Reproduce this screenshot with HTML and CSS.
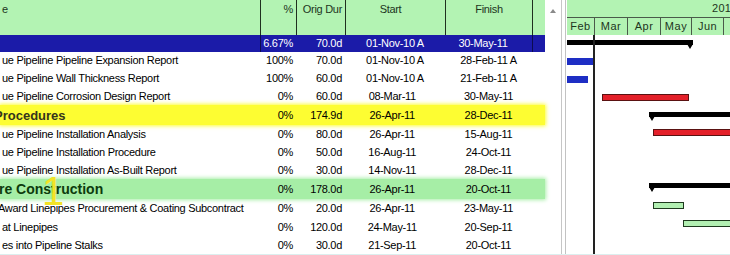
FILE: index.html
```html
<!DOCTYPE html>
<html lang="en">

<head>
    <meta charset="UTF-8">
    <title>Schedule</title>
    <link rel="stylesheet" href="styles.css">
</head>

<body>

    <div class="screen">
        <div class="sheet">
            <div class="cols head">
                <div class="name">e</div>
                <div class="pct">%</div>
                <div class="dur">Orig Dur</div>
                <div class="start">Start</div>
                <div class="finish">Finish</div>
                <div class="extra"></div>
            </div>

            <div class="cols row r17 sel">
                <div class="name"></div>
                <div class="pct">6.67%</div>
                <div class="dur">70.0d</div>
                <div class="start">01-Nov-10 A</div>
                <div class="finish">30-May-11&nbsp;&nbsp;&nbsp;&nbsp;</div>
                <div class="extra"></div>
            </div>
            <div class="cols row r17">
                <div class="name">ue Pipeline Pipeline Expansion Report</div>
                <div class="pct">100%</div>
                <div class="dur">70.0d</div>
                <div class="start">01-Nov-10 A</div>
                <div class="finish">28-Feb-11 A</div>
                <div class="extra"></div>
            </div>
            <div class="cols row">
                <div class="name">ue Pipeline Wall Thickness Report</div>
                <div class="pct">100%</div>
                <div class="dur">60.0d</div>
                <div class="start">01-Nov-10 A</div>
                <div class="finish">21-Feb-11 A</div>
                <div class="extra"></div>
            </div>
            <div class="cols row">
                <div class="name">ue Pipeline Corrosion Design Report</div>
                <div class="pct">0%</div>
                <div class="dur">60.0d</div>
                <div class="start">08-Mar-11&nbsp;&nbsp;</div>
                <div class="finish">30-May-11</div>
                <div class="extra"></div>
            </div>
            <div class="cols row r20 band-yellow">
                <div class="name wbs-yellow">Procedures</div>
                <div class="pct">0%</div>
                <div class="dur">174.9d</div>
                <div class="start">26-Apr-11&nbsp;&nbsp;</div>
                <div class="finish">28-Dec-11</div>
                <div class="extra"></div>
            </div>
            <div class="cols row">
                <div class="name">ue Pipeline Installation Analysis</div>
                <div class="pct">0%</div>
                <div class="dur">80.0d</div>
                <div class="start">26-Apr-11&nbsp;&nbsp;</div>
                <div class="finish">15-Aug-11</div>
                <div class="extra"></div>
            </div>
            <div class="cols row">
                <div class="name">ue Pipeline Installation Procedure</div>
                <div class="pct">0%</div>
                <div class="dur">50.0d</div>
                <div class="start">16-Aug-11&nbsp;&nbsp;</div>
                <div class="finish">24-Oct-11</div>
                <div class="extra"></div>
            </div>
            <div class="cols row">
                <div class="name">ue Pipeline Installation As-Built Report</div>
                <div class="pct">0%</div>
                <div class="dur">30.0d</div>
                <div class="start">14-Nov-11&nbsp;&nbsp;</div>
                <div class="finish">28-Dec-11</div>
                <div class="extra"></div>
            </div>
            <div class="cols row r20 band-green">
                <div class="name wbs-green">re Construction</div>
                <div class="pct">0%</div>
                <div class="dur">178.0d</div>
                <div class="start">26-Apr-11&nbsp;&nbsp;</div>
                <div class="finish">20-Oct-11</div>
                <div class="extra"></div>
            </div>
            <div class="cols row r19">
                <div class="name cut">Award Linepipes Procurement &amp; Coating Subcontract</div>
                <div class="pct">0%</div>
                <div class="dur">20.0d</div>
                <div class="start">26-Apr-11&nbsp;&nbsp;</div>
                <div class="finish">23-May-11</div>
                <div class="extra"></div>
            </div>
            <div class="cols row">
                <div class="name">at Linepipes</div>
                <div class="pct">0%</div>
                <div class="dur">120.0d</div>
                <div class="start">24-May-11&nbsp;&nbsp;</div>
                <div class="finish">20-Sep-11</div>
                <div class="extra"></div>
            </div>
            <div class="cols row">
                <div class="name">es into Pipeline Stalks</div>
                <div class="pct">0%</div>
                <div class="dur">30.0d</div>
                <div class="start">21-Sep-11&nbsp;&nbsp;</div>
                <div class="finish">20-Oct-11</div>
                <div class="extra"></div>
            </div>

            <span class="mark">1</span>
        </div>

        <div class="vscroll">
            <svg width="6" height="4" viewBox="0 0 6 4"><path d="M0 4 L3 0 L6 4 Z" fill="#8a8a8a"/></svg>
        </div>
        <div class="split"></div>

        <div class="gantt">
            <div class="year"><span>2011</span></div>
            <div class="months">
                <div class="month" style="width:27px">Feb</div>
                <div class="month" style="width:33px">Mar</div>
                <div class="month" style="width:33px">Apr</div>
                <div class="month" style="width:31px">May</div>
                <div class="month" style="width:32px">Jun</div>
                <div class="month" style="width:32px">Jul</div>
            </div>

            <div class="gbody">
                <div class="grow r17"><div class="sum end" style="margin-left:-30px;width:156px"></div></div>
                <div class="grow r17"><div class="bar blue" style="margin-left:-3px;width:30px"></div></div>
                <div class="grow"><div class="bar blue" style="margin-left:-3px;width:24px"></div></div>
                <div class="grow"><div class="bar red" style="margin-left:35px;width:87px"></div></div>
                <div class="grow r20"><div class="sum start" style="margin-left:82px;width:120px"></div></div>
                <div class="grow"><div class="bar red up" style="margin-left:86px;width:120px"></div></div>
                <div class="grow"></div>
                <div class="grow"></div>
                <div class="grow r20"><div class="sum start up" style="margin-left:82px;width:120px"></div></div>
                <div class="grow r19"><div class="bar green" style="margin-left:86px;width:31px"></div></div>
                <div class="grow"><div class="bar green" style="margin-left:116px;width:90px"></div></div>
                <div class="grow"></div>
                <div class="datadate"></div>
            </div>
        </div>
    </div>

</body>

</html>
```

FILE: styles.css
```css
body {
    margin: 0;
    padding: 0;
    background-color: #fff;
    font-family: "Liberation Sans", Arial, sans-serif;
    font-size: 11px;
    color: #000;
    overflow: hidden;
}

.screen {
    display: flex;
    width: 730px;
    height: 254px;
    overflow: hidden;
    border-bottom: 1px solid #dcefef;
}

.sheet {
    position: relative;
    width: 545px;
    flex: none;
}

.cols {
    display: grid;
    grid-template-columns: 260px 36px 49px 100px 87px 13px;
    letter-spacing: -0.3px;
}

.cols > div {
    white-space: nowrap;
    overflow: hidden;
}

.head {
    height: 35px;
    background-color: #b3f3b3;
    color: #1d351d;
}

.head > div {
    padding-top: 3px;
    line-height: 13px;
}

.head > div + div {
    border-left: 1px solid #1f2f1f;
}

.row {
    height: 18px;
    align-items: center;
    line-height: 13px;
}

.r17 {
    height: 17px;
}

.r19 {
    height: 19px;
}

.r20 {
    height: 20px;
}

.name {
    padding-left: 2px;
}

.pct,
.dur {
    text-align: right;
    padding-right: 3px;
}

.start,
.finish {
    text-align: center;
}

.head .start {
    padding-right: 10px;
}

.sel {
    background-color: #1b1ba8;
    color: #fff;
}

.sel > div {
    align-self: stretch;
    display: flex;
    align-items: center;
}

.sel .pct,
.sel .dur {
    justify-content: flex-end;
}

.sel .start,
.sel .finish {
    justify-content: center;
}

.sel .pct,
.sel .extra {
    border-left: 1px solid #0c0c50;
}

.band-yellow {
    background-color: #fdfd32;
    box-shadow: 0 0 4px 1px #fdfd32;
}

.band-green {
    background-color: #a6eea6;
    box-shadow: 0 0 4px 1px #a6eea6;
}

.wbs-yellow {
    font-size: 13px;
    font-weight: bold;
    letter-spacing: 0;
    color: #35351c;
    text-indent: -8px;
}

.wbs-green {
    font-size: 14px;
    font-weight: bold;
    letter-spacing: 0;
    color: #0d3b0d;
    text-indent: -3px;
}

.cut {
    text-indent: -4px;
}

.mark {
    position: absolute;
    left: 42px;
    top: 171px;
    font-size: 40px;
    line-height: 40px;
    color: #f3e326;
}

.vscroll {
    width: 16px;
    flex: none;
    padding: 9px 0 0 5px;
    box-sizing: border-box;
}

.vscroll svg {
    display: block;
}

.split {
    width: 6px;
    flex: none;
    background: linear-gradient(to right, #c6c6c6 1px, #fff 1px, #fff 4px, #c2c2c2 4px, #c2c2c2 5px, #fff 5px);
}

.gantt {
    flex: 1;
    overflow: hidden;
    color: #1d351d;
}

.year {
    height: 17px;
    background-color: #b3f3b3;
    border-bottom: 1px solid #4a5a4a;
    line-height: 17px;
    padding-left: 145px;
    letter-spacing: 0.3px;
    white-space: nowrap;
}

.months {
    display: flex;
    height: 17px;
    background-color: #b3f3b3;
    line-height: 17px;
}

.month {
    flex: none;
    text-align: center;
    letter-spacing: 0.5px;
    box-sizing: border-box;
}

.month + .month {
    border-left: 1px solid #4a5a4a;
}

.gbody {
    position: relative;
}

.grow {
    display: flex;
    align-items: flex-start;
    height: 18px;
}

.bar {
    flex: none;
    height: 7px;
    margin-top: 5px;
    box-sizing: border-box;
}

.bar.up {
    margin-top: 4px;
}

.blue {
    background-color: #1e2ec4;
}

.red {
    background-color: #e4202a;
    border: 1px solid #5a1212;
}

.green {
    background-color: #b2f0b2;
    border: 1px solid #1e3a1e;
}

.sum {
    flex: none;
    position: relative;
    height: 5px;
    margin-top: 5px;
    background-color: #000;
}

.sum.up {
    margin-top: 4px;
}

.sum.start::before,
.sum.end::after {
    content: "";
    position: absolute;
    top: 4px;
    border-left: 3px solid transparent;
    border-right: 3px solid transparent;
    border-top: 5px solid #000;
}

.sum.start::before {
    left: 0;
}

.sum.end::after {
    right: 0;
}

.datadate {
    position: absolute;
    left: 26px;
    top: 0;
    width: 2px;
    height: 230px;
    background-color: #222;
}
```
